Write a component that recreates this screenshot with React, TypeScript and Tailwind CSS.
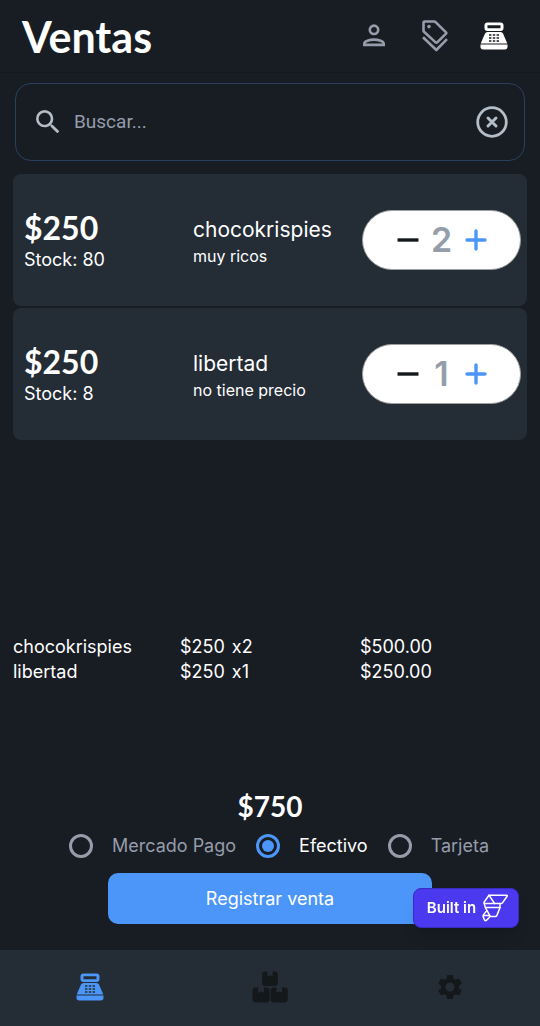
import { useState } from "react";
import { MdSearch, MdSettings } from "react-icons/md";

const products = [
  { name: "chocokrispies", note: "muy ricos", price: 250, stock: 80, initial: 2 },
  { name: "libertad", note: "no tiene precio", price: 250, stock: 8, initial: 1 },
];

const methods = ["Mercado Pago", "Efectivo", "Tarjeta"];

function PersonIcon() {
  return (
    <svg width="24" height="24" viewBox="0 0 24 24" fill="none" stroke="currentColor" strokeWidth="2.6" aria-hidden="true">
      <circle cx="12" cy="5.8" r="4.2" />
      <path d="M2.3 20.9V19.6C2.3 17.2 7.5 15.6 12 15.6S21.7 17.2 21.7 19.6V20.9Z" />
    </svg>
  );
}

function TagsIcon() {
  return (
    <svg width="26" height="32" viewBox="0 0 26 32" fill="none" stroke="currentColor" strokeWidth="2.6" strokeLinejoin="round" aria-hidden="true">
      <path d="M1.5 2.6Q1.5 1.5 2.6 1.5H12.2Q13 1.5 13.6 2.1L24 12.4Q24.6 13 24 13.7L15.2 22.4Q14.4 23.2 13.6 22.4L2 11.8Q1.5 11.3 1.5 10.6Z" />
      <path d="M1 17.2L14.3 30L25 19.2" />
      <circle cx="7" cy="6.6" r="1.8" fill="currentColor" stroke="none" />
    </svg>
  );
}

function RegisterIcon() {
  return (
    <svg width="28" height="28" viewBox="0 0 28 28" fill="currentColor" fillRule="evenodd" aria-hidden="true">
      <path d="M7.5 0.5H20.5A3 3 0 0 1 23.5 3.5V6A3 3 0 0 1 20.5 9H7.5A3 3 0 0 1 4.5 6V3.5A3 3 0 0 1 7.5 0.5ZM7.5 3.2V6.2H20.5V3.2Z" />
      <path d="M7.5 10H20.5Q22.3 10 23 11.6L27.3 21.4H0.7L5 11.6Q5.7 10 7.5 10ZM9 12.2V13.8H11.4V12.2ZM12.8 12.2V13.8H15.2V12.2ZM16.6 12.2V13.8H19V12.2ZM9 15.2V16.8H11.4V15.2ZM12.8 15.2V16.8H15.2V15.2ZM16.6 15.2V16.8H19V15.2ZM9 18.2V19.8H11.4V18.2ZM12.8 18.2V19.8H15.2V18.2ZM16.6 18.2V19.8H19V18.2Z" />
      <path d="M0.5 22.4H27.5V24.8A2.7 2.7 0 0 1 24.8 27.5H3.2A2.7 2.7 0 0 1 0.5 24.8Z" />
    </svg>
  );
}

function BoxesIcon() {
  const box = "M3 0H5.2V5.2L7.8 3.8L10.4 5.2V0H12.6Q15.6 0 15.6 3V11.4Q15.6 14.4 12.6 14.4H3Q0 14.4 0 11.4V3Q0 0 3 0Z";
  return (
    <svg width="36" height="32" viewBox="0 0 36 32" fill="currentColor" aria-hidden="true">
      <path d={box} transform="translate(10.2 0.5)" />
      <path d={box} transform="translate(0.5 16.4) scale(1.1 1.05)" />
      <path d={box} transform="translate(18.6 16.4) scale(1.1 1.05)" />
    </svg>
  );
}

function ClearIcon() {
  return (
    <svg width="32" height="32" viewBox="0 0 32 32" fill="none" stroke="currentColor" strokeWidth="3" strokeLinecap="round" aria-hidden="true">
      <circle cx="16" cy="16" r="14.3" strokeWidth="2.8" />
      <path d="M12 12L20 20M20 12L12 20" />
    </svg>
  );
}

function StepIcon({ plus = false }: { plus?: boolean }) {
  return (
    <svg width="22" height="22" viewBox="0 0 22 22" fill="none" stroke="currentColor" strokeWidth="3.4" strokeLinecap={plus ? "round" : "butt"} aria-hidden="true">
      {plus ? <path d="M2 11H20M11 2V20" /> : <path d="M0.5 11H21.5" />}
    </svg>
  );
}

function FlowLogo() {
  return (
    <svg width="27" height="28" viewBox="0 0 27 28" fill="none" stroke="currentColor" strokeWidth="1.5" strokeLinejoin="round" strokeLinecap="round" aria-hidden="true">
      <path d="M7 1.2H24.6Q25.8 1.2 25.1 2.3L20.6 8.6Q20 9.5 19 9.5H2.4L2 8.2Z" />
      <path d="M7 1.2L12.5 9.5" />
      <path d="M2.2 9.5L3.4 13.6H18V9.5" />
      <path d="M3.4 13.6L8.2 22.4H13.4Q14.4 22.4 14.8 21.6L18 13.6" />
      <path d="M4.8 16.6L1.6 20.6Q0.8 21.8 1.4 23.4L2.6 26Q3.4 27.2 4.6 26.2L7.2 23.4Q8 22.2 7.4 21.2" />
      <path d="M1.4 21.4H7.4" />
    </svg>
  );
}

export default function App() {
  const [query, setQuery] = useState("");
  const [counts, setCounts] = useState(products.map((p) => p.initial));
  const [method, setMethod] = useState("Efectivo");
  const change = (index: number, by: number) =>
    setCounts(counts.map((c, i) => (i === index ? Math.max(0, c + by) : c)));
  const total = products.reduce((sum, p, i) => sum + p.price * counts[i], 0);

  return (
    <div className="flex min-h-screen flex-col bg-[#181c23] font-['Inter',sans-serif] text-white">
      <header className="flex h-[73px] items-center justify-between border-b border-[#14181b] pr-8 pl-[22px]">
        <h1 className="font-['Lato',sans-serif] text-[43px] leading-none font-bold">Ventas</h1>
        <div className="flex items-center gap-8 text-[#959dab]">
          <button type="button" aria-label="Clientes" className="mr-1"><PersonIcon /></button>
          <button type="button" aria-label="Promociones"><TagsIcon /></button>
          <button type="button" aria-label="Caja" className="text-white"><RegisterIcon /></button>
        </div>
      </header>

      <main className="flex flex-1 flex-col">
        <div className="mx-[15px] mt-[10px] flex h-[78px] items-center rounded-2xl border border-[#29405f] px-4 text-[#b4bec8]">
          <MdSearch size={32} />
          <input
            type="text"
            aria-label="Buscar"
            placeholder="Buscar..."
            value={query}
            onChange={(e) => setQuery(e.target.value)}
            className="ml-[10px] min-w-0 flex-1 bg-transparent font-['Roboto',sans-serif] text-[19px] outline-none placeholder:text-[#959dab]"
          />
          <button type="button" aria-label="Borrar" onClick={() => setQuery("")}><ClearIcon /></button>
        </div>

        <ul className="mx-[13px] mt-[13px] flex flex-col gap-[2px]">
          {products.map((p, i) => (
            <li key={p.name} className="flex h-[132px] items-center rounded-lg bg-[#242c35] pr-[6px] pl-[11px]">
              <div className="w-[169px] pt-1">
                <p className="font-['Lato',sans-serif] text-[32px] leading-9 font-bold">${p.price}</p>
                <p className="text-[18px] leading-7">Stock: {p.stock}</p>
              </div>
              <div className="flex-1 pt-1">
                <h2 className="text-[21px] leading-7">{p.name}</h2>
                <p className="text-[16px] leading-6">{p.note}</p>
              </div>
              <div className="flex h-[60px] w-[159px] items-center justify-center rounded-full border border-[#9e9e9e] bg-white">
                <button type="button" aria-label={`Quitar ${p.name}`} onClick={() => change(i, -1)} className="text-[#14181b]">
                  <StepIcon />
                </button>
                <span className="w-[46px] text-center text-[34px] leading-10 font-semibold text-[#959dab]">{counts[i]}</span>
                <button type="button" aria-label={`Agregar ${p.name}`} onClick={() => change(i, 1)} className="text-[#4b96f8]">
                  <StepIcon plus />
                </button>
              </div>
            </li>
          ))}
        </ul>

        <table className="mx-[13px] mt-[194px] table-fixed text-left text-[18px] leading-[25px]">
          <tbody>
            {products.map((p, i) => (
              <tr key={p.name}>
                <td className="w-[167px] p-0">{p.name}</td>
                <td className="w-[180px] p-0">
                  <span className="mr-[7px]">${p.price}</span>
                  <span>x{counts[i]}</span>
                </td>
                <td className="p-0">${(p.price * counts[i]).toFixed(2)}</td>
              </tr>
            ))}
          </tbody>
        </table>

        <section className="mt-auto flex flex-col items-center pb-[26px]">
          <p className="font-['Lato',sans-serif] text-[28px] leading-9 font-bold">${total}</p>
          <div role="radiogroup" aria-label="Forma de pago" className="mt-2 ml-[18px] flex gap-5">
            {methods.map((m) => (
              <label key={m} className={`flex items-center gap-[19px] text-[18px] leading-7 ${method === m ? "text-white" : "text-[#959dab]"}`}>
                <input
                  type="radio"
                  name="method"
                  checked={method === m}
                  onChange={() => setMethod(m)}
                  className="grid size-6 appearance-none place-content-center rounded-full border-[3px] border-[#959dab] before:size-3 before:rounded-full checked:border-[#4b96f8] checked:before:bg-[#4b96f8]"
                />
                {m}
              </label>
            ))}
          </div>
          <button type="button" className="mt-[13px] h-[51px] w-3/5 rounded-[10px] bg-[#4b96f8] text-[18px]">Registrar venta</button>
        </section>
      </main>

      <nav className="grid h-[76px] grid-cols-3 items-center justify-items-center bg-[#242c35] pb-[2px] text-[#14181b]">
        <a href="#ventas" aria-label="Ventas" className="text-[#4b96f8]"><RegisterIcon /></a>
        <a href="#inventario" aria-label="Inventario"><BoxesIcon /></a>
        <a href="#ajustes" aria-label="Ajustes"><MdSettings size={30} /></a>
      </nav>

      <a href="#flow" className="fixed right-[21px] bottom-[98px] flex h-10 w-[106px] items-center justify-center gap-[6px] rounded-lg border border-[#3a2bc0] bg-[#4b39ef] pl-1 text-[15px] font-semibold shadow-lg">
        Built in
        <FlowLogo />
      </a>
    </div>
  );
}
